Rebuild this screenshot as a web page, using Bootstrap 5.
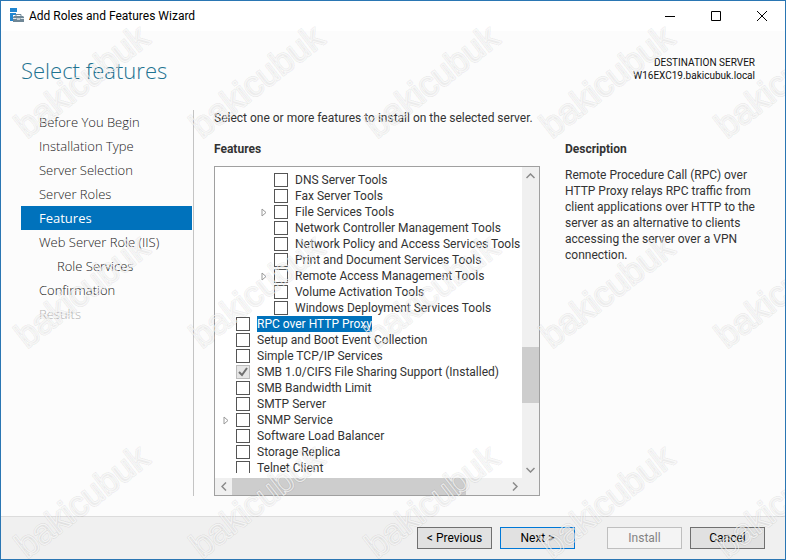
<!DOCTYPE html>
<html lang="en">
<head>
<meta charset="utf-8">
<meta name="viewport" content="width=device-width, initial-scale=1">
<title>Add Roles and Features Wizard</title>
<link href="https://cdn.jsdelivr.net/npm/bootstrap@5.3.0/dist/css/bootstrap.min.css" rel="stylesheet">
<style>
  body { font-family: Roboto, "Noto Sans", sans-serif; font-size: 12px; line-height: 16px; color: #333; }
  .wizard { border: 1px solid #2a76b3; background: #fcfcfc; }
  .titlebar { height: 30px; background: #fff; color: #000; padding-left: 8px; }
  .win-btn { width: 46px; height: 29px; padding: 0; border: 0; background: none; display: flex; align-items: center; justify-content: center; }
  .wiz-head { height: 79px; padding: 24px 30px 0 20px; }
  .wiz-title { font-family: "Open Sans", sans-serif; font-size: 22px; line-height: 30px; font-weight: 300; color: #1f7391; }
  .dest { font-size: 10px; line-height: 13px; color: #111; padding-top: 1px; }
  .steps { width: 193px; padding-left: 20px; padding-right: 1px; border-right: 1px solid #c4c4c4; }
  .steps .nav-link { font-family: "Open Sans", sans-serif; font-size: 13px; line-height: 24px; padding: 0 0 0 18px; color: #222; font-weight: 300; border-radius: 0; }
  .steps .nav-link.active { background: #0072bc; color: #fff; font-weight: 400; }
  .steps .nav-link.sub-step { padding-left: 36px; }
  .steps .nav-link.disabled { color: #b4b4b4; }
  .wiz-body { padding-bottom: 20px; }
  .wiz-main { padding-left: 20px; }
  .panes { gap: 25px; }
  .pane-title { font-size: 12px; line-height: 16px; font-weight: 700; margin: 15px 0 9px; }
  .about { width: 220px; padding-right: 16px; }
  .about .pane-title { margin-bottom: 10px; }
  .feature-box { border: 1px solid #a0a0a0; background: #fff; }
  .tree-view { padding: 5px 0; }
  .tree-row { height: 16px; padding-left: 7px; white-space: nowrap; }
  .tree-row.deep { padding-left: 45px; }
  .twist { width: 14px; height: 16px; padding: 0; border: 0; background: none; display: flex; align-items: center; }
  .tree-row .form-check-input { width: 14px; height: 14px; margin: 0 7px 0 0; border: 1px solid #555; border-radius: 0; background-color: #fff; }
  .tree-row .form-check-input:checked { opacity: 1; border-color: #bcbcbc; background-color: #e6e6e6; background-size: 12px 12px;
    background-image: url("data:image/svg+xml,%3Csvg xmlns='http://www.w3.org/2000/svg' viewBox='0 0 12 12'%3E%3Cpath d='M2 6l3 3 5-7' fill='none' stroke='%23707070' stroke-width='2'/%3E%3C/svg%3E"); }
  .tree-row .form-check-input:disabled ~ label { opacity: 1; }
  .tree-row .picked { background: #0072bc; color: #fff; }
  .sb { background: #f0f0f0; }
  .sb-v { width: 17px; }
  .sb-h { height: 17px; }
  .sb button { width: 17px; height: 17px; padding: 0; border: 0; background: none; display: flex; align-items: center; justify-content: center; }
  .sb-thumb { background: #cdcdcd; }
  .wiz-foot { height: 43px; padding: 0 20px; border-top: 1px solid #dcdcdc; background: #f0f0f0; }
  .wiz-foot .btn { width: 75px; height: 22px; padding: 0; font-size: 12px; line-height: 20px; border-radius: 0; border: 1px solid #707070; background: #e1e1e1; color: #000; }
  .wiz-foot .btn.go { border-color: #0078d7; }
  .wiz-foot .btn:disabled { border-color: #bfbfbf; background: #f4f4f4; color: #838383; opacity: 1; }
  .gap-wide { margin-left: 24px; }
  .watermark { pointer-events: none; font-family: "Liberation Sans", Arial, sans-serif; font-size: 35px; }
</style>
<script src="https://cdn.jsdelivr.net/npm/bootstrap@5.3.0/dist/js/bootstrap.bundle.min.js"></script>
</head>
<body>
<div class="wizard vh-100 d-flex flex-column position-relative overflow-hidden">
  <header class="titlebar d-flex align-items-center flex-shrink-0">
    <svg width="16" height="16" viewBox="0 0 16 16" aria-hidden="true">
      <path d="M1 0h7v4H1zM1 5h6v2H4v6H1z" fill="#2186d0"/>
      <path d="M7 8.500V6.500h5v2" fill="none" stroke="#6f8796"/>
      <path d="M5 8h9l1 1v5H4V9z" fill="#6f8796"/><path d="M4 10.500h3.500m4 0H15" stroke="#dfe6ea"/><path d="M8 10h3v2H8z" fill="#c3ced5"/>
    </svg>
    <span class="ms-1">Add Roles and Features Wizard</span>
    <div class="d-flex ms-auto">
      <button class="win-btn" aria-label="Minimize"><svg width="10" height="10"><path d="M0 5.500h10" stroke="#000"/></svg></button>
      <button class="win-btn" aria-label="Maximize"><svg width="10" height="10"><path d="M.5 .5h9v9h-9z" fill="none" stroke="#000"/></svg></button>
      <button class="win-btn" aria-label="Close"><svg width="10" height="10"><path d="M0 0l10 10M10 0L0 10" stroke="#000"/></svg></button>
    </div>
  </header>

  <div class="wiz-head d-flex justify-content-between flex-shrink-0">
    <h1 class="wiz-title m-0">Select features</h1>
    <div class="dest text-end">DESTINATION SERVER<br>W16EXC19.bakicubuk.local</div>
  </div>

  <div class="wiz-body d-flex flex-fill overflow-hidden">
    <nav class="steps nav flex-column flex-nowrap flex-shrink-0" aria-label="Wizard steps">
      <a class="nav-link" href="#">Before You Begin</a>
      <a class="nav-link" href="#">Installation Type</a>
      <a class="nav-link" href="#">Server Selection</a>
      <a class="nav-link" href="#">Server Roles</a>
      <a class="nav-link active" href="#" aria-current="step">Features</a>
      <a class="nav-link" href="#">Web Server Role (IIS)</a>
      <a class="nav-link sub-step" href="#">Role Services</a>
      <a class="nav-link" href="#">Confirmation</a>
      <a class="nav-link disabled" href="#" aria-disabled="true">Results</a>
    </nav>

    <main class="wiz-main d-flex flex-column flex-fill">
      <p class="m-0">Select one or more features to install on the selected server.</p>
      <div class="panes d-flex flex-fill overflow-hidden">
        <section class="d-flex flex-column flex-fill overflow-hidden">
          <h2 class="pane-title">Features</h2>
          <div class="feature-box d-flex flex-column flex-fill overflow-hidden">
            <div class="d-flex flex-fill overflow-hidden">
              <div class="tree-view d-flex flex-fill overflow-hidden">
                <div class="flex-fill overflow-hidden" id="tree"></div>
              </div>
              <div class="sb sb-v d-flex flex-column flex-shrink-0">
                <button aria-label="Scroll up"><svg width="9" height="6"><path d="M.5 5l4-4 4 4" fill="none" stroke="#8a8a8a" stroke-width="1.500"/></svg></button>
                <div class="flex-fill d-flex flex-column"><div style="flex:163"></div><div class="sb-thumb" style="flex:56"></div><div style="flex:58"></div></div>
                <button aria-label="Scroll down"><svg width="9" height="6"><path d="M.5 1l4 4 4-4" fill="none" stroke="#8a8a8a" stroke-width="1.500"/></svg></button>
              </div>
            </div>
            <div class="sb sb-h d-flex flex-shrink-0 pe-3">
              <button aria-label="Scroll left"><svg width="6" height="9"><path d="M5 .5l-4 4 4 4" fill="none" stroke="#8a8a8a" stroke-width="1.500"/></svg></button>
              <div class="flex-fill d-flex"><div class="sb-thumb" style="flex:234"></div><div style="flex:40"></div></div>
              <button aria-label="Scroll right"><svg width="6" height="9"><path d="M1 .5l4 4-4 4" fill="none" stroke="#8a8a8a" stroke-width="1.500"/></svg></button>
            </div>
          </div>
        </section>
        <aside class="about flex-shrink-0">
          <h2 class="pane-title">Description</h2>
          <p class="m-0">Remote Procedure Call (RPC) over HTTP Proxy relays RPC traffic from client applications over HTTP to the server as an alternative to clients accessing the server over a VPN connection.</p>
        </aside>
      </div>
    </main>
  </div>

  <footer class="wiz-foot d-flex align-items-center justify-content-end gap-2 flex-shrink-0">
    <button class="btn">&lt; Previous</button>
    <button class="btn go">Next &gt;</button>
    <button class="btn gap-wide" disabled>Install</button>
    <button class="btn">Cancel</button>
  </footer>

  <svg class="watermark position-absolute top-0 start-0 w-100 h-100" aria-hidden="true">
    <defs>
      <g id="wm-word" fill="none" stroke-linejoin="round">
        <text transform="rotate(-38)" stroke="#000" stroke-opacity=".06" stroke-width="3">bakicubuk</text>
        <text transform="rotate(-38)" stroke="#fff" stroke-opacity=".7" stroke-width="1">bakicubuk</text>
      </g>
    </defs>
    <g id="marks"></g>
  </svg>
</div>
<script>
  // Feature tree: [label, nested, expandable, state]
  const features = [
    ["DNS Server Tools", 1, 0], ["Fax Server Tools", 1, 0], ["File Services Tools", 1, 1],
    ["Network Controller Management Tools", 1, 0], ["Network Policy and Access Services Tools", 1, 0],
    ["Print and Document Services Tools", 1, 0], ["Remote Access Management Tools", 1, 1],
    ["Volume Activation Tools", 1, 0], ["Windows Deployment Services Tools", 1, 0],
    ["RPC over HTTP Proxy", 0, 0, "picked"], ["Setup and Boot Event Collection", 0, 0],
    ["Simple TCP/IP Services", 0, 0], ["SMB 1.0/CIFS File Sharing Support (Installed)", 0, 0, "installed"],
    ["SMB Bandwidth Limit", 0, 0], ["SMTP Server", 0, 0], ["SNMP Service", 0, 1],
    ["Software Load Balancer", 0, 0], ["Storage Replica", 0, 0], ["Telnet Client", 0, 0]
  ];
  const arrow = '<svg width="8" height="9"><path d="M2 1v7l4-3.500z" fill="none" stroke="#999"/></svg>';
  document.getElementById("tree").innerHTML = features.map(([label, deep, open, state], i) =>
    `<div class="tree-row d-flex align-items-center${deep ? " deep" : ""}">
      ${open ? `<button class="twist" aria-label="Expand ${label}">${arrow}</button>` : '<span class="twist"></span>'}
      <input class="form-check-input flex-shrink-0" type="checkbox" id="f${i}"${state === "installed" ? " checked disabled" : ""}>
      <label for="f${i}"${state === "picked" ? ' class="picked"' : ""}>${label}</label>
    </div>`).join("");

  // Repeat the watermark on a 175 by 210 grid over the window
  let marks = "";
  for (let y = 138; y < innerHeight + 210; y += 210)
    for (let x = 26; x < innerWidth; x += 175) marks += `<use href="#wm-word" x="${x}" y="${y}"/>`;
  document.getElementById("marks").innerHTML = marks;
</script>
</body>
</html>
